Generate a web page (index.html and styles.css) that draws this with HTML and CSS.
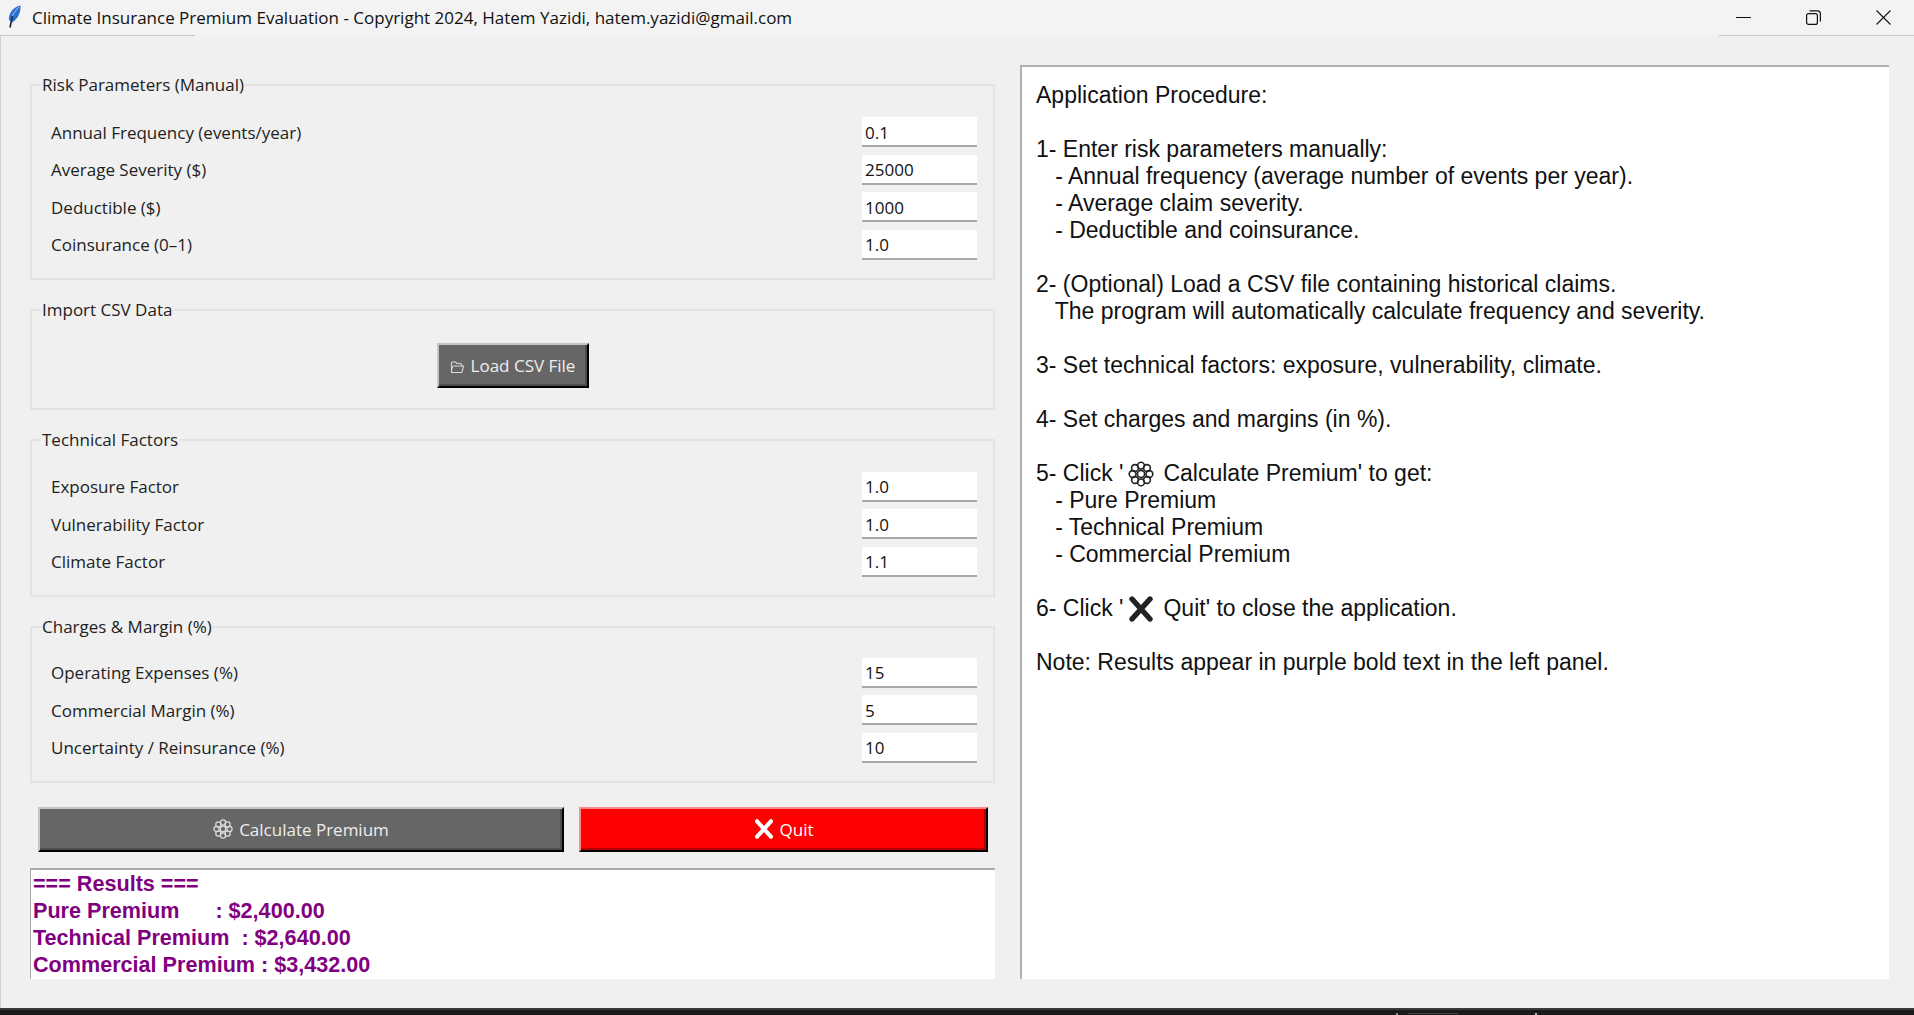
FILE: index.html
```html
<!DOCTYPE html>
<html lang="en">
<head>
  <meta charset="UTF-8" />
  <meta name="viewport" content="width=device-width, initial-scale=1" />
  <title>Climate Insurance Premium Evaluation</title>
  <link rel="stylesheet" href="styles.css">
</head>
<body>
  <svg class="icon-defs" width="0" height="0" aria-hidden="true">
    <symbol id="flower" viewBox="0 0 26 26">
      <g fill="none" stroke="currentColor" stroke-width="1.6">
        <circle cx="13" cy="13" r="3.6" />
        <circle cx="13" cy="4.6" r="3.4" />
        <circle cx="13" cy="21.4" r="3.4" />
        <circle cx="4.6" cy="13" r="3.4" />
        <circle cx="21.4" cy="13" r="3.4" />
        <circle cx="7" cy="7" r="3.4" />
        <circle cx="19" cy="7" r="3.4" />
        <circle cx="7" cy="19" r="3.4" />
        <circle cx="19" cy="19" r="3.4" />
      </g>
    </symbol>
    <symbol id="cross" viewBox="0 0 26 26">
      <path d="M4 3 L22 23 M22 3 L4 23" fill="none" stroke="currentColor" stroke-width="5.4" stroke-linecap="round" />
    </symbol>
  </svg>

  <header class="titlebar">
    <svg class="feather" width="13" height="23" viewBox="0 0 13 23">
      <path d="M1 15 C0 9 5 2 12.5 0.5 C13 7 10 14 4 17.5 Z" fill="#2a6fd0" />
      <path d="M3 15 C4 10 7 6 11 2" fill="none" stroke="#a6ccf5" stroke-width="1" />
      <path d="M4.5 11 L2 22.5" fill="none" stroke="#1a2430" stroke-width="1.6" />
    </svg>
    <span class="title-text">Climate Insurance Premium Evaluation - Copyright 2024, Hatem Yazidi, hatem.yazidi@gmail.com</span>
    <div class="window-controls">
      <svg width="15" height="15" viewBox="0 0 15 15"><path d="M0 7.5 H15" stroke="#111" stroke-width="1" /></svg>
      <svg width="15" height="15" viewBox="0 0 15 15"><rect x="0.6" y="3.6" width="10.8" height="10.8" rx="2" fill="none" stroke="#111" stroke-width="1.2" /><path d="M3.5 0.8 H11.5 Q14.4 0.8 14.4 3.7 V11.5" fill="none" stroke="#111" stroke-width="1.2" /></svg>
      <svg width="15" height="15" viewBox="0 0 15 15"><path d="M0.5 0.5 L14.5 14.5 M14.5 0.5 L0.5 14.5" stroke="#111" stroke-width="1.1" /></svg>
    </div>
  </header>
  <div class="edge-row"><span class="edge"></span><span class="edge"></span></div>

  <main class="content">
    <div class="left-col">
      <fieldset class="group group-risk">
        <legend>Risk Parameters (Manual)</legend>
        <div class="rows">
          <label class="row">Annual Frequency (events/year)<input type="text" value="0.1"></label>
          <label class="row">Average Severity ($)<input type="text" value="25000"></label>
          <label class="row">Deductible ($)<input type="text" value="1000"></label>
          <label class="row">Coinsurance (0–1)<input type="text" value="1.0"></label>
        </div>
      </fieldset>

      <fieldset class="group group-import">
        <legend>Import CSV Data</legend>
        <div class="import-row">
          <button class="btn btn-load" type="button">
            <svg class="folder" width="15" height="14" viewBox="0 0 15 14">
              <path d="M1.5 12.5 V3 Q1.5 2 2.5 2 H5.5 L7 3.5 H10.5 Q11.5 3.5 11.5 4.5 V6 M1.5 12.5 Q2 6 3.5 6 H13.5 L12 12 Q11.8 12.5 11 12.5 Z" fill="none" stroke="#d8d8d8" stroke-width="1.1" />
            </svg>
            Load CSV File
          </button>
        </div>
      </fieldset>

      <fieldset class="group group-factors">
        <legend>Technical Factors</legend>
        <div class="rows">
          <label class="row">Exposure Factor<input type="text" value="1.0"></label>
          <label class="row">Vulnerability Factor<input type="text" value="1.0"></label>
          <label class="row">Climate Factor<input type="text" value="1.1"></label>
        </div>
      </fieldset>

      <fieldset class="group group-charges">
        <legend>Charges &amp; Margin (%)</legend>
        <div class="rows">
          <label class="row">Operating Expenses (%)<input type="text" value="15"></label>
          <label class="row">Commercial Margin (%)<input type="text" value="5"></label>
          <label class="row">Uncertainty / Reinsurance (%)<input type="text" value="10"></label>
        </div>
      </fieldset>

      <div class="actions">
        <button class="btn btn-calc" type="button"><svg class="btn-icon" width="20" height="20"><use href="#flower" /></svg>Calculate Premium</button>
        <button class="btn btn-quit" type="button"><svg class="btn-icon" width="20" height="20"><use href="#cross" /></svg>Quit</button>
      </div>

      <div class="results">=== Results ===
Pure Premium      : $2,400.00
Technical Premium  : $2,640.00
Commercial Premium : $3,432.00</div>
    </div>

    <div class="help">Application Procedure:

1- Enter risk parameters manually:
   - Annual frequency (average number of events per year).
   - Average claim severity.
   - Deductible and coinsurance.

2- (Optional) Load a CSV file containing historical claims.
   The program will automatically calculate frequency and severity.

3- Set technical factors: exposure, vulnerability, climate.

4- Set charges and margins (in %).

5- Click '<svg class="help-icon" width="26" height="26"><use href="#flower" /></svg>Calculate Premium' to get:
   - Pure Premium
   - Technical Premium
   - Commercial Premium

6- Click '<svg class="help-icon" width="26" height="26"><use href="#cross" /></svg>Quit' to close the application.

Note: Results appear in purple bold text in the left panel.</div>
  </main>

  <footer class="taskbar">
    <div class="task-segment"><span class="task-tab"></span></div>
  </footer>
</body>
</html>
```

FILE: styles.css
```css
* {
  box-sizing: border-box;
}

html, body {
  height: 100%;
}

body {
  margin: 0;
  display: flex;
  flex-direction: column;
  overflow: hidden;
  background: #f0f0f0;
  color: #1a1a1a;
  font-family: "Open Sans", "Noto Sans", sans-serif;
  font-size: 17px;
}

.icon-defs {
  display: block;
  height: 0;
}

.titlebar {
  display: flex;
  align-items: center;
  height: 35px;
  padding-left: 8px;
  background: #f3f3f3;
}

.feather {
  flex: none;
  margin-top: -2px;
}

.title-text {
  margin-left: 11px;
  color: #111;
  font-size: 17px;
}

.window-controls {
  display: flex;
  gap: 55px;
  margin-left: auto;
  padding-right: 23px;
}

.edge-row {
  display: flex;
  justify-content: space-between;
  height: 1px;
  background: #f0f0f0;
}

.edge {
  width: 195px;
  background: #c8c8c8;
}

.content {
  flex: 1;
  display: flex;
  gap: 25px;
  padding: 0 25px 29px 29px;
  border-left: 1px solid #d0d0d0;
  min-height: 0;
}

.left-col {
  width: 965px;
  display: flex;
  flex-direction: column;
  gap: 18px;
  padding-top: 37px;
}

.group {
  margin: 0;
  min-width: 0;
  padding: 20px 16px 17px 19px;
  border: 2px solid #e3e3e3;
}

.group-risk {
  padding-bottom: 18px;
}

.group-factors {
  padding-bottom: 18px;
}

.group-charges {
  padding-top: 19px;
  padding-bottom: 18px;
}

.group legend {
  margin-left: -10px;
  padding: 0 1px;
  height: 24px;
  line-height: 24px;
  color: #222;
}

.rows {
  display: flex;
  flex-direction: column;
  gap: 7.5px;
}

.row {
  display: flex;
  align-items: center;
  justify-content: space-between;
  color: #222;
}

.row input {
  width: 115px;
  height: 30px;
  padding: 2px 3px 0;
  border: none;
  border-bottom: 2px solid #a8a8a8;
  background: #fff;
  color: #111;
  font: inherit;
}

.group-import {
  padding: 21px 19px 20px;
}

.import-row {
  display: flex;
  justify-content: center;
}

.btn {
  display: inline-flex;
  align-items: center;
  justify-content: center;
  height: 45px;
  padding: 0;
  border: 2px solid;
  background: #666;
  color: #eee;
  font: inherit;
  border-color: #c4c4c4 #000 #000 #c4c4c4;
  box-shadow: inset -2px -2px 0 #4d4d4d;
}

.btn-load {
  width: 152px;
  gap: 6px;
}

.folder {
  margin-top: 4px;
}

.actions {
  display: flex;
  gap: 15px;
  margin: 6px 7px 0 8px;
}

.btn-calc {
  width: 526px;
  gap: 6px;
}

.btn-quit {
  flex: 1;
  gap: 6px;
  background: #f00;
  color: #fff;
  border-color: #ff8c8c #000 #000 #ff8c8c;
  box-shadow: inset -2px -2px 0 #b30000;
}

.btn-calc .btn-icon {
  color: #ddd;
}

.results {
  height: 112px;
  margin-top: -2px;
  padding: 0 0 0 2px;
  border-top: 2px solid #aaa;
  border-left: 1px solid #aaa;
  background: #fff;
  color: #800080;
  font-family: "Liberation Sans", Arial, sans-serif;
  font-size: 21.6px;
  font-weight: bold;
  line-height: 27px;
  white-space: pre;
  overflow: hidden;
}

.help {
  flex: 1;
  margin-top: 29px;
  padding: 15px 0 0 14px;
  border-top: 2px solid #b0b0b0;
  border-left: 2px solid #b0b0b0;
  background: #fff;
  color: #111;
  font-family: "Liberation Sans", Arial, sans-serif;
  font-size: 23px;
  line-height: 27px;
  white-space: pre;
  overflow: hidden;
}

.help-icon {
  vertical-align: -6px;
  margin: 0 9px 0 5px;
  color: #222;
}

.taskbar {
  height: 7px;
  padding-left: 1396px;
  border-top: 2px solid #3a3a3a;
  background: #1a1a1a;
}

.task-segment {
  width: 141px;
  height: 100%;
  border-left: 2px solid #8a8a8a;
  border-right: 2px solid #b5b5b5;
}

.task-tab {
  display: block;
  width: 50px;
  height: 1px;
  margin: 3px 0 0 10px;
  background: #444;
}
```
